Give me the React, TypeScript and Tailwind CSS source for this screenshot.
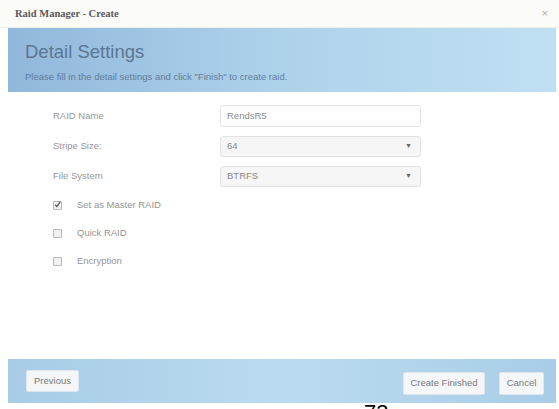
const sans = { fontFamily: '"Liberation Sans", Arial, sans-serif' };

function Checkbox({ checked }: { checked?: boolean }) {
  return (
    <span className="w-[9px] h-[9px] border border-[#b8b8b8] bg-[#f1f1f1] rounded-[1px] flex items-center justify-center">
      {checked && (
        <svg width="9" height="9" viewBox="0 0 9 9" className="-mt-[2px]">
          <path d="M1.5 4.8 L3.6 7 L8 1.2" fill="none" stroke="#555" strokeWidth="1.6" />
        </svg>
      )}
    </span>
  );
}

function Select({ value }: { value: string }) {
  return (
    <div className="w-[201px] h-[21px] border border-[#e2e2e2] rounded-[3px] bg-[#f6f6f6] flex items-center justify-between pl-[6px] pr-[8px] text-[9.5px] text-[#8a8a8a]">
      <span>{value}</span>
      <span className="text-[7px] text-[#666]">▼</span>
    </div>
  );
}

export default function App() {
  return (
    <div className="w-[559px] h-[409px] bg-white flex flex-col overflow-hidden" style={sans}>
      <div className="h-[28px] bg-[#fbfbf8] border-b border-[#eeeeea] flex items-center justify-between pl-[15px] pr-[11px]">
        <span
          className="text-[10.5px] font-bold text-[#5a5a5a]"
          style={{ fontFamily: '"Liberation Serif", "Times New Roman", serif' }}
        >
          Raid Manager - Create
        </span>
        <span className="text-[11px] text-[#aaa]">×</span>
      </div>

      <div className="ml-[8px] mr-[3px] h-[64px] bg-gradient-to-r from-[#91b7db] via-[#afd2eb] to-[#bfe0f2] pl-[17px] pt-[15px]">
        <h1 className="text-[18.5px] leading-none text-[#5a7793]">Detail Settings</h1>
        <p className="mt-[8px] text-[9.5px] text-[#627e9a]">
          Please fill in the detail settings and click "Finish" to create raid.
        </p>
      </div>

      <div className="flex-1 pl-[53px] pt-[13px] flex flex-col text-[9.5px] text-[#959595]">
        <div className="flex flex-col gap-[9px]">
          <div className="flex items-center h-[22px]">
            <span className="w-[167px]">RAID Name</span>
            <div className="w-[201px] h-[22px] border border-[#e4e4e4] rounded-[3px] bg-white flex items-center pl-[6px] text-[#8a8a8a]">
              RendsR5
            </div>
          </div>
          <div className="flex items-center">
            <span className="w-[167px]">Stripe Size:</span>
            <Select value="64" />
          </div>
          <div className="flex items-center">
            <span className="w-[167px]">File System</span>
            <Select value="BTRFS" />
          </div>
        </div>
        <div className="mt-[4px] flex flex-col">
          {[
            ['Set as Master RAID', true],
            ['Quick RAID', false],
            ['Encryption', false],
          ].map(([label, checked]) => (
            <div key={label as string} className="h-[28px] flex items-center gap-[15px]">
              <Checkbox checked={checked as boolean} />
              <span>{label as string}</span>
            </div>
          ))}
        </div>
      </div>

      <div className="ml-[8px] mr-[3px] h-[44px] bg-gradient-to-r from-[#a8cce7] via-[#badbef] to-[#a9cde8] flex items-center justify-between pl-[18px] pr-[12px] text-[9.5px] text-[#7a7a7a]">
        <button className="h-[22px] px-[7px] bg-[#f4f6f8] rounded-[2px] border border-[#dfe6ec]">Previous</button>
        <div className="flex gap-[14px] mt-[5px]">
          <button className="h-[23px] w-[82px] bg-[#f4f6f8] rounded-[2px] border border-[#dfe6ec]">Create Finished</button>
          <button className="h-[23px] w-[45px] bg-[#f4f6f8] rounded-[2px] border border-[#dfe6ec]">Cancel</button>
        </div>
      </div>

      <div className="h-[6px] pl-[364px]">
        <span className="block text-[22px] leading-none -mt-[1px] text-black">73</span>
      </div>
    </div>
  );
}
